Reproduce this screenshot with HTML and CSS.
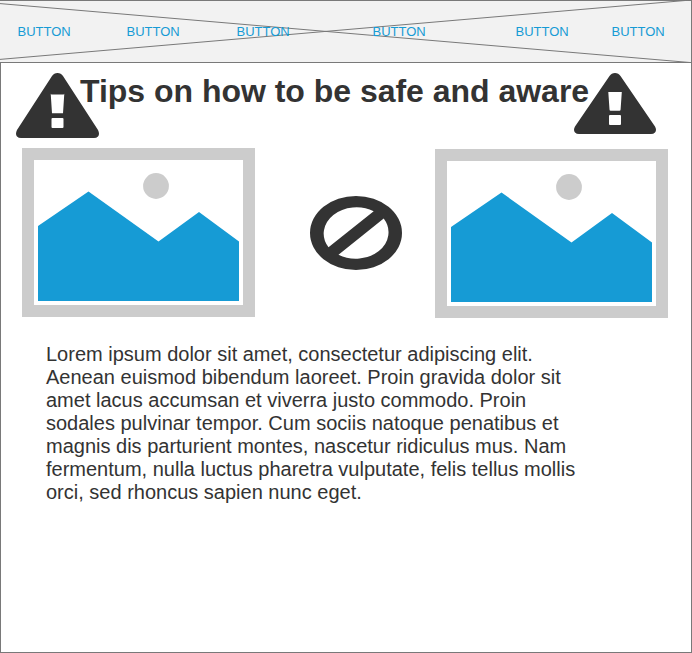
FILE: index.html
```
<!DOCTYPE html>
<html lang="en">
<head>
<meta charset="utf-8">
<title>Tips on how to be safe and aware</title>
<link rel="stylesheet" href="styles.css">
</head>
<body>
<div class="page">
  <header class="header">
    <svg class="header-cross" viewBox="0 0 692 63" aria-hidden="true"><path d="M-42 0 691 62.6M-42 63 691 0"/></svg>
    <nav class="nav">
      <a>BUTTON</a><a>BUTTON</a><a>BUTTON</a><a>BUTTON</a><a>BUTTON</a><a>BUTTON</a>
    </nav>
  </header>
  <main class="main">
    <div class="title-row">
      <svg class="warning warning-left" viewBox="0 0 83 65" preserveAspectRatio="none" aria-hidden="true"><path fill-rule="evenodd" d="M36 3Q38 0 41.500 0T47 3L82 57Q84 61 82 63.500Q80.500 65 78 65H5Q2.500 65 1 63.500Q-1 61 1 57ZM34.700 20.500 36 40.200H47L48.300 20.500Q48.300 21.500 47.300 21.500H35.700Q34.700 21.500 34.700 20.500ZM36.500 45Q35.500 45 35.500 46V54Q35.500 55 36.500 55H46.500Q47.500 55 47.500 54V46Q47.500 45 46.500 45Z"/></svg>
      <h1 class="title">Tips on how to be safe and aware</h1>
      <svg class="warning warning-right" viewBox="0 0 82 61" preserveAspectRatio="none" aria-hidden="true"><path fill-rule="evenodd" d="M35.500 3Q37.500 0 41 0T46.500 3L81 53.500Q83 57 81 59.500Q79.500 61 77 61H5Q2.500 61 1 59.500Q-1 57 1 53.500ZM34.300 19 35.500 36.500Q35.600 37.700 36.600 37.700H45.500Q46.500 37.700 46.600 36.500L47.800 19ZM36 42Q35 42 35 43V51Q35 52 36 52H46Q47 52 47 51V43Q47 42 46 42Z"/></svg>
    </div>
    <div class="gallery">
      <svg class="picture" viewBox="0 0 233 169" role="img" aria-label="Picture"><path class="frame" d="M6 6H227V163H6Z"/><path class="mountains" d="M16 78 66.500 43.500 136.500 93.500 177 64 217 93.500V153H16Z"/><circle class="sun" cx="134" cy="38" r="12.900"/></svg>
      <svg class="ban" viewBox="0 0 92 74" aria-hidden="true"><path fill-rule="evenodd" d="M0 37A46 37 0 0 1 92 37A46 37 0 0 1 0 37ZM18.500 51.300 63.700 15.200A32.800 26.300 0 0 0 18.500 51.300ZM28.500 58.700A32.800 26.300 0 0 0 73.700 22.600Z"/></svg>
      <svg class="picture picture-right" viewBox="0 0 233 169" role="img" aria-label="Picture"><path class="frame" d="M6 6H227V163H6Z"/><path class="mountains" d="M16 78 66.500 43.500 136.500 93.500 177 64 217 93.500V153H16Z"/><circle class="sun" cx="134" cy="38" r="12.900"/></svg>
    </div>
    <p class="copy">Lorem ipsum dolor sit amet, consectetur adipiscing elit.<br>Aenean euismod bibendum laoreet. Proin gravida dolor sit<br>amet lacus accumsan et viverra justo commodo. Proin<br>sodales pulvinar tempor. Cum sociis natoque penatibus et<br>magnis dis parturient montes, nascetur ridiculus mus. Nam<br>fermentum, nulla luctus pharetra vulputate, felis tellus mollis<br>orci, sed rhoncus sapien nunc eget.</p>
  </main>
</div>
</body>
</html>
```
FILE: styles.css
```
* { box-sizing: border-box; }
body {
  margin: 0;
  background: #fff;
  color: #333;
  font-family: "Liberation Sans", Arial, sans-serif;
}
.page {
  display: flex;
  flex-direction: column;
  width: 692px;
  height: 653px;
  border-right: 1px solid #797979;
  border-bottom: 1px solid #797979;
  overflow: hidden;
}
.header {
  position: relative;
  height: 63px;
  background: #f2f2f2;
  border-top: 1px solid #797979;
  border-bottom: 1px solid #797979;
}
.header-cross {
  position: absolute;
  top: -1px;
  left: 0;
  width: 692px;
  height: 63px;
  fill: none;
  stroke: #797979;
}
.nav {
  position: relative;
  display: grid;
  grid-template-columns: 109px 110px 136px 143px 96px 60px;
  align-items: center;
  height: 61px;
  padding-left: 17.5px;
  color: #169bd5;
  font-size: 13px;
}
.main {
  flex: 1;
  border-left: 1px solid #797979;
}
.title-row {
  display: flex;
  align-items: flex-start;
  height: 85px;
  padding: 10px 0 0 15px;
}
.warning { flex: none; fill: #333; }
.warning-left { width: 83px; height: 65px; }
.warning-right { width: 82px; height: 61px; margin-left: -15px; }
.title {
  flex: none;
  width: 509px;
  margin: 0 0 0 -19px;
  font-size: 32px;
  line-height: 37px;
  letter-spacing: -0.02px;
  white-space: nowrap;
}
.gallery {
  display: flex;
  align-items: flex-start;
  padding-left: 21px;
  height: 170px;
}
.picture { width: 233px; height: 169px; }
.picture-right { margin: 1px 0 0 33px; }
.frame { fill: #fff; stroke: #ccc; stroke-width: 12; }
.mountains { fill: #169bd5; }
.sun { fill: #ccc; }
.ban { width: 92px; height: 74px; margin: 48px 0 0 55px; fill: #333; }
.copy {
  margin: 25px 0 0 45px;
  font-size: 20px;
  line-height: 23px;
  white-space: nowrap;
}
```
